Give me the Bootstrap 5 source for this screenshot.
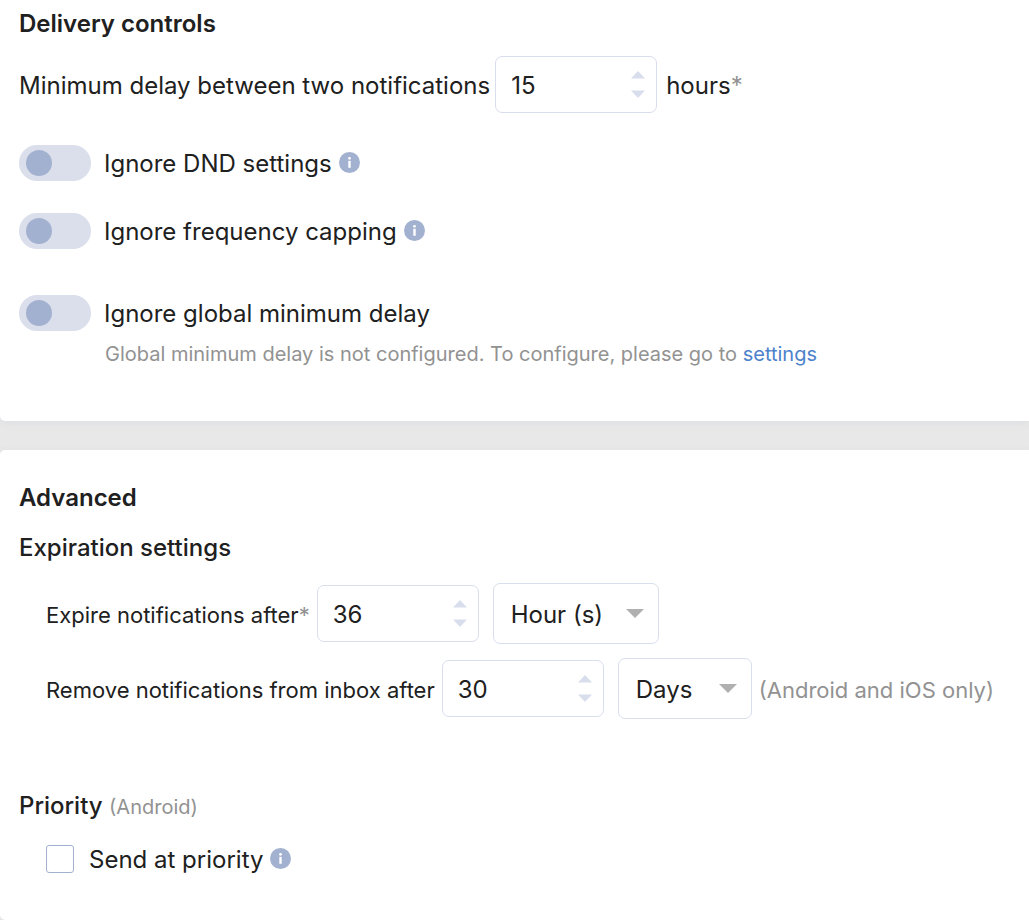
<!DOCTYPE html>
<html lang="en">
<head>
<meta charset="utf-8">
<meta name="viewport" content="width=device-width, initial-scale=1">
<title>Delivery controls</title>
<link href="https://cdn.jsdelivr.net/npm/bootstrap@5.3.0/dist/css/bootstrap.min.css" rel="stylesheet">
<style>
  body { font-family: Inter, "Liberation Sans", sans-serif; font-size: 24px; line-height: 32px; color: #202020; background: #e8e8e8; }
  .panel { background: #fff; padding: 0 19px; border-radius: 5px 0 0 5px; box-shadow: 0 2px 8px rgba(90, 110, 150, .07); }
  .panel-delivery { padding-top: 8px; padding-bottom: 53px; border-top-left-radius: 0; }
  .panel-advanced { padding-top: 32px; padding-bottom: 43px; margin-top: 29px; }
  .panel-title { font-size: 24px; line-height: 32px; font-weight: 600; margin: 0; }
  .panel-subtitle { font-size: 24px; line-height: 32px; font-weight: 500; margin: 18px 0 0; }
  .priority-title { margin-top: 71px; }
  .text-note { color: #929292; }
  .size-md { font-size: 22px; }
  .size-sm { font-size: 20px; line-height: 28px; }
  .settings-link { color: #4c82cb; text-decoration: none; }
  .indent { padding-left: 27px; }
  .stack-toggles { margin-top: 32px; gap: 32px; }
  .toggle-global { margin-top: 14px; }
  .toggle-note { padding-left: 86px; margin-top: 9px; }
  .stack-fields { margin-top: 19px; gap: 14px; }
  .field-row { gap: 7px; }
  .field-row-wide { gap: 5px; }
  .field-text { padding-top: 2px; }

  .number-box.form-control { width: 162px; height: 57px; padding: 2px 48px 0 15px; font-size: 24px; color: #202020; border: 1px solid #d9deed; border-radius: 7px; appearance: textfield; -moz-appearance: textfield;
    background: #fff url("data:image/svg+xml,%3Csvg xmlns='http://www.w3.org/2000/svg' width='14' height='27' viewBox='0 0 14 27'%3E%3Cpath fill='%23d9deed' d='M0 7.500 7 0l7 7.500zM0 19.500h14L7 27z'/%3E%3C/svg%3E") no-repeat right 11px center; }
  .number-box::-webkit-inner-spin-button, .number-box::-webkit-outer-spin-button { -webkit-appearance: none; margin: 0; }
  .unit-box.form-select { height: 61px; margin-left: 7px; padding: 2px 40px 0 17px; font-size: 24px; line-height: 32px; color: #202020; border: 1px solid #d9deed; border-radius: 7px;
    background: #fff url("data:image/svg+xml,%3Csvg xmlns='http://www.w3.org/2000/svg' width='18' height='9' viewBox='0 0 18 9'%3E%3Cpath fill='%23b0b0b0' d='M0 0h18L9 9z'/%3E%3C/svg%3E") no-repeat right 14px center; }
  .unit-box.unit-hours { width: 166px; }
  .unit-box.unit-days { width: 134px; }

  .switch-row { gap: 13px; }
  .switch-row .form-check-input { width: 72px; height: 36px; margin: 0; border: 0; border-radius: 18px; flex-shrink: 0;
    background: #dadfeb url("data:image/svg+xml,%3Csvg xmlns='http://www.w3.org/2000/svg' viewBox='0 0 26 26'%3E%3Ccircle cx='13' cy='13' r='13' fill='%23a3b1d0'/%3E%3C/svg%3E") no-repeat 7px center / 26px 26px; }
  .switch-row .form-check-input:checked { background-position: 39px center; }
  .tick-row { margin-top: 20px; }
  .tick-row .form-check-input { width: 28px; height: 28px; margin: 0 15px 0 0; border: 1px solid #a3b1d0; border-radius: 3px; flex-shrink: 0; }
  .label-group { gap: 7px; }
  .info-icon { width: 21px; height: 21px; display: block; flex-shrink: 0; margin-bottom: 2px; }
</style>
</head>
<body class="d-flex flex-column min-vh-100">
<svg class="d-none" aria-hidden="true">
  <symbol id="info" viewBox="0 0 21 21">
    <circle cx="10.500" cy="10.500" r="10.500" fill="#a3b1d0"/>
    <circle cx="10.500" cy="6.300" r="1.400" fill="#fff"/>
    <path d="M9.300 8.800h2.400v7H9.300z" fill="#fff"/>
  </symbol>
</svg>

<section class="panel panel-delivery">
  <h2 class="panel-title">Delivery controls</h2>
  <div class="field-row-wide d-flex align-items-center mt-3">
    <label for="delay" class="field-text">Minimum delay between two notifications</label>
    <input id="delay" type="number" class="form-control number-box" value="15">
    <span class="field-text ps-1">hours<span class="text-note">*</span></span>
  </div>
  <div class="stack-toggles d-flex flex-column">
    <div class="switch-row form-switch d-flex align-items-center p-0">
      <input id="dnd" class="form-check-input" type="checkbox" role="switch">
      <div class="label-group d-flex align-items-center">
        <label for="dnd" class="field-text">Ignore DND settings</label>
        <svg class="info-icon" role="img" aria-label="Info"><use href="#info"/></svg>
      </div>
    </div>
    <div class="switch-row form-switch d-flex align-items-center p-0">
      <input id="capping" class="form-check-input" type="checkbox" role="switch">
      <div class="label-group d-flex align-items-center">
        <label for="capping" class="field-text">Ignore frequency capping</label>
        <svg class="info-icon" role="img" aria-label="Info"><use href="#info"/></svg>
      </div>
    </div>
    <div class="toggle-global">
      <div class="switch-row form-switch d-flex align-items-center p-0">
        <input id="global" class="form-check-input" type="checkbox" role="switch">
        <label for="global" class="field-text">Ignore global minimum delay</label>
      </div>
      <p class="toggle-note size-sm text-note mb-0">Global minimum delay is not configured. To configure, please go to <a class="settings-link" href="#">settings</a></p>
    </div>
  </div>
</section>

<section class="panel panel-advanced flex-grow-1">
  <h2 class="panel-title">Advanced</h2>
  <h3 class="panel-subtitle">Expiration settings</h3>
  <div class="stack-fields indent d-flex flex-column">
    <div class="field-row d-flex align-items-center">
      <label for="expire" class="field-text size-md">Expire notifications after<span class="text-note">*</span></label>
      <input id="expire" type="number" class="form-control number-box" value="36">
      <select class="form-select unit-box unit-hours" aria-label="Expiration unit"><option>Hour (s)</option><option>Day (s)</option></select>
    </div>
    <div class="field-row d-flex align-items-center">
      <label for="remove" class="field-text size-md">Remove notifications from inbox after</label>
      <input id="remove" type="number" class="form-control number-box" value="30">
      <select class="form-select unit-box unit-days" aria-label="Removal unit"><option>Days</option><option>Hours</option></select>
      <span class="field-text size-md text-note">(Android and iOS only)</span>
    </div>
  </div>
  <h3 class="panel-subtitle priority-title">Priority <small class="size-sm text-note fw-normal">(Android)</small></h3>
  <div class="tick-row indent d-flex align-items-center">
    <input id="priority" class="form-check-input" type="checkbox">
    <div class="label-group d-flex align-items-center">
      <label for="priority" class="field-text">Send at priority</label>
      <svg class="info-icon" role="img" aria-label="Info"><use href="#info"/></svg>
    </div>
  </div>
</section>
<script src="https://cdn.jsdelivr.net/npm/bootstrap@5.3.0/dist/js/bootstrap.bundle.min.js"></script>
</body>
</html>
